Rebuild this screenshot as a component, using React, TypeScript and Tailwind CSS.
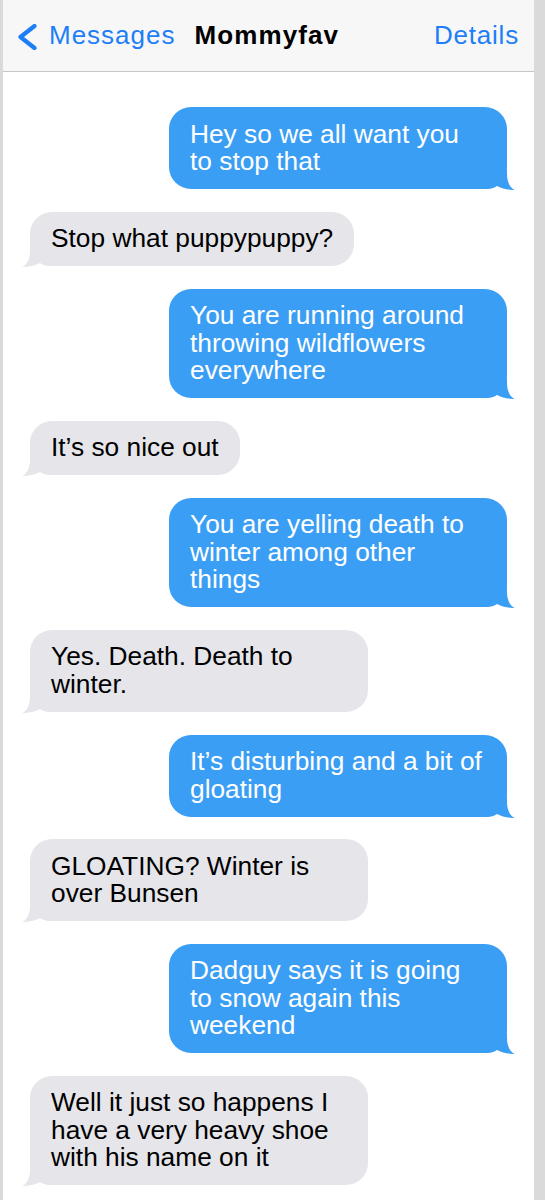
import React from "react";

type Msg = { from: "me" | "them"; lines: string[] };

const messages: Msg[] = [
  { from: "me", lines: ["Hey so we all want you", "to stop that"] },
  { from: "them", lines: ["Stop what puppypuppy?"] },
  { from: "me", lines: ["You are running around", "throwing wildflowers", "everywhere"] },
  { from: "them", lines: ["It\u2019s so nice out"] },
  { from: "me", lines: ["You are yelling death to", "winter among other", "things"] },
  { from: "them", lines: ["Yes. Death. Death to", "winter."] },
  { from: "me", lines: ["It\u2019s disturbing and a bit of", "gloating"] },
  { from: "them", lines: ["GLOATING? Winter is", "over Bunsen"] },
  { from: "me", lines: ["Dadguy says it is going", "to snow again this", "weekend"] },
  { from: "them", lines: ["Well it just so happens I", "have a very heavy shoe", "with his name on it"] },
];

const TAIL = "M0 0 H21 V5 C21 12.5 23.5 18 28.5 21 C22.5 21.2 15.5 19.4 11 17 C8.5 19 5 20 0 20 Z";

function Bubble({ m }: { m: Msg }) {
  const me = m.from === "me";
  const multi = m.lines.length > 1;
  return (
    <div className={`flex ${me ? "justify-end pr-[27px]" : "justify-start pl-[27px]"}`}>
      <div
        className={`relative rounded-[22px] py-[13.5px] pl-[21px] pr-[21px] text-[26.3px] leading-[27.5px] whitespace-nowrap ${
          multi ? "w-[338px]" : "w-fit"
        } ${me ? "bg-[#3b9ef5] text-white" : "bg-[#e5e5ea] text-black"}`}
      >
        {me ? (
          <svg
            className="absolute bottom-[-1px] right-[-9px]"
            width="30"
            height="21"
            viewBox="0 0 30 21"
          >
            <path d={TAIL} fill="#3b9ef5" />
          </svg>
        ) : (
          <svg
            className="absolute bottom-[-1px] left-[-9px]"
            width="30"
            height="21"
            viewBox="0 0 30 21"
          >
            <g transform="translate(30,0) scale(-1,1)">
              <path d={TAIL} fill="#e5e5ea" />
            </g>
          </svg>
        )}
        <div className="relative">
          {m.lines.map((l, i) => (
            <div key={i}>{l}</div>
          ))}
        </div>
      </div>
    </div>
  );
}

export default function App() {
  return (
    <div
      className="min-h-[1200px] w-full bg-[#dadada] pl-[3px] pr-[11px]"
      style={{ fontFamily: '"Liberation Sans", Arial, Helvetica, sans-serif' }}
    >
      <div className="min-h-[1200px] bg-white">
        <header className="flex h-[72px] items-center border-b border-[#c6c6c9] bg-[#f7f7f8] pl-[14px] pr-[15px]">
          <svg width="20" height="26" viewBox="0 0 20 26" className="mt-[2px] shrink-0">
            <polyline
              points="17.5,2 3.5,13 17.5,24"
              fill="none"
              stroke="#1e7ef7"
              strokeWidth="4.2"
              strokeLinecap="round"
              strokeLinejoin="round"
            />
          </svg>
          <span className="ml-[12px] text-[26px] tracking-[1px] text-[#1e7ef7]">Messages</span>
          <span className="ml-[19px] text-[26px] font-bold tracking-[1.1px] text-black">Mommyfav</span>
          <span className="ml-auto text-[26px] tracking-[0.8px] text-[#1e7ef7]">Details</span>
        </header>
        <div className="flex flex-col gap-[22.6px] pt-[35px] pb-[14px]">
          {messages.map((m, i) => (
            <Bubble key={i} m={m} />
          ))}
        </div>
      </div>
    </div>
  );
}
